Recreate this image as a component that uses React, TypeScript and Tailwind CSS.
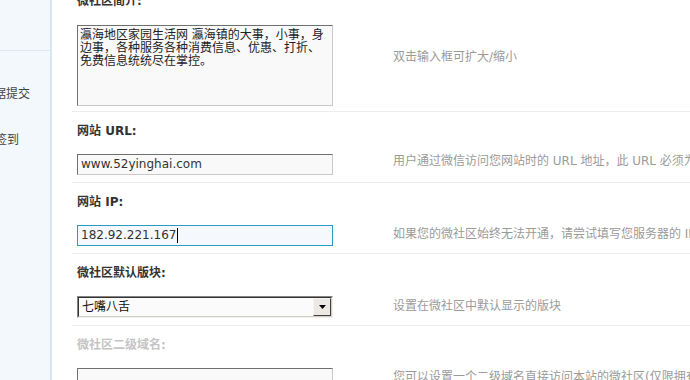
import React from "react";

const F = "font-['DejaVu_Sans','Noto_Sans_CJK_SC',sans-serif]";

function Label({ text, disabled }: { text: string; disabled?: boolean }) {
  return (
    <div
      className={`h-[14px] leading-[14px] text-[12px] font-bold whitespace-nowrap ${
        disabled ? "text-[#c4c4c4]" : "text-[#333]"
      }`}
    >
      {text}
    </div>
  );
}

function Desc({ text, cls }: { text: string; cls: string }) {
  return (
    <div
      className={`ml-[60px] whitespace-nowrap text-[12px] leading-[14px] text-[#9a9a9a] ${cls}`}
    >
      {text}
    </div>
  );
}

const boxBorder =
  "border border-solid border-t-[#707070] border-l-[#707070] border-r-[#c8c8c8] border-b-[#c8c8c8] bg-[#f9f9f9]";

export default function App() {
  return (
    <div
      className={`${F} w-[690px] h-[380px] overflow-hidden flex bg-white text-[12px]`}
    >
      {/* sidebar */}
      <div className="w-[52px] shrink-0 h-full overflow-hidden bg-[#f3f8fc] border-r-[2px] border-[#d6e6f2] text-[#444]">
        <div className="h-[51px] border-b border-[#dfe8ef]" />
        <div className="mt-[36px] ml-[-18px] whitespace-nowrap leading-[14px]">
          数据提交
        </div>
        <div className="mt-[32px] ml-[-29px] whitespace-nowrap leading-[14px]">
          每日签到
        </div>
      </div>

      {/* main */}
      <div className="flex-1 min-w-0 pl-[20px] overflow-hidden">
        {/* 微社区简介 */}
        <div className="-mt-[19px] border-t border-[#ececec] pl-[5px] pt-[12px] pb-[5px]">
          <Label text="微社区简介:" />
          <div className="mt-[17px] flex items-center h-[81px]">
            <div
              className={`${boxBorder} w-[256px] h-[81px] shrink-0 px-[2px] pt-[3px] leading-[13px] text-[#222] whitespace-pre`}
            >
              {"瀛海地区家园生活网 瀛海镇的大事，小事，身\n边事，各种服务各种消费信息、优惠、打折、\n免费信息统统尽在掌控。"}
            </div>
            <Desc text="双击输入框可扩大/缩小" cls="mb-[17px]" />
          </div>
        </div>

        {/* 网站 URL */}
        <div className="border-t border-[#ececec] pl-[5px] pt-[12px] pb-[7px]">
          <Label text="网站 URL:" />
          <div className="mt-[16px] flex items-center h-[21px]">
            <div
              className={`${boxBorder} w-[256px] h-[21px] shrink-0 px-[3px] leading-[19px] text-[#333]`}
            >
              www.52yinghai.com
            </div>
            <Desc
              text="用户通过微信访问您网站时的 URL 地址，此 URL 必须为外网可以访问的地址"
              cls="mb-[8px]"
            />
          </div>
        </div>

        {/* 网站 IP */}
        <div className="border-t border-[#ececec] pl-[5px] pt-[12px] pb-[7px]">
          <Label text="网站 IP:" />
          <div className="mt-[16px] flex items-center h-[21px]">
            <div className="w-[256px] h-[21px] shrink-0 border border-[#2a9ac6] bg-[#f5f9fd] px-[3px] leading-[19px] text-[#333] flex items-center">
              <span>182.92.221.167</span>
              <span className="inline-block w-px h-[15px] bg-black ml-[1px]" />
            </div>
            <Desc
              text="如果您的微社区始终无法开通，请尝试填写您服务器的 IP 地址"
              cls="mb-[4px]"
            />
          </div>
        </div>

        {/* 默认版块 */}
        <div className="border-t border-[#ececec] pl-[5px] pt-[12px] pb-[7px]">
          <Label text="微社区默认版块:" />
          <div className="mt-[16px] flex items-center h-[22px]">
            <div className="w-[256px] h-[22px] shrink-0 border border-t-[#848484] border-l-[#848484] border-r-[#f0f0f0] border-b-[#f0f0f0]">
              <div className="h-full border border-t-[#333] border-l-[#333] border-r-[#d4d0c8] border-b-[#d4d0c8] bg-[#fbfbfb] flex items-center">
                <div className="flex-1 pl-[3px] leading-[16px] text-[#111]">七嘴八舌</div>
                <div className="w-[18px] h-[18px] shrink-0 border border-t-[#f4f4f4] border-l-[#f4f4f4] border-r-[#404040] border-b-[#404040] bg-[#ece9e4] flex items-center justify-center">
                  <svg width="7" height="4" viewBox="0 0 7 4">
                    <path d="M0 0H7L3.5 4Z" fill="#000" />
                  </svg>
                </div>
              </div>
            </div>
            <Desc text="设置在微社区中默认显示的版块" cls="mb-[3px]" />
          </div>
        </div>

        {/* 二级域名 */}
        <div className="border-t border-[#ececec] pl-[5px] pt-[12px] pb-[7px]">
          <Label text="微社区二级域名:" disabled />
          <div className="mt-[16px] flex items-center h-[21px]">
            <div
              className={`${boxBorder} w-[256px] h-[21px] shrink-0 px-[3px] leading-[19px] text-[#333]`}
            />
            <Desc
              text="您可以设置一个二级域名直接访问本站的微社区(仅限拥有独立服务器的站长)"
              cls="mb-[4px]"
            />
          </div>
        </div>
      </div>
    </div>
  );
}
